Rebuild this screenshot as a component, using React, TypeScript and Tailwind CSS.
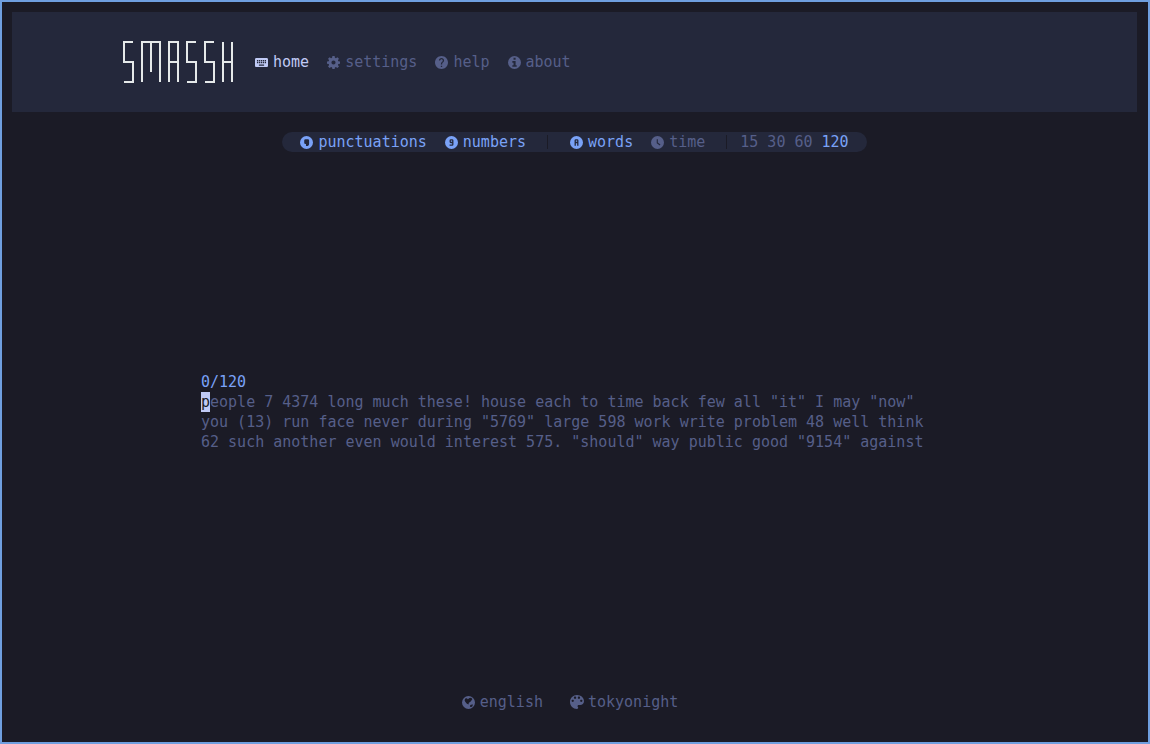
import { useState, type ReactNode } from "react";

function Glyph({ children }: { children: ReactNode }) {
  return (
    <svg viewBox="2 2 20 20" className="size-[13px]" fill="currentColor" fillRule="evenodd" aria-hidden="true">
      {children}
    </svg>
  );
}

const KeyboardIcon = () => (
  <Glyph>
    <path d="M20 5H4c-1.1 0-1.99.9-1.99 2L2 17c0 1.1.9 2 2 2h16c1.1 0 2-.9 2-2V7c0-1.1-.9-2-2-2zm-9 3h2v2h-2V8zm0 3h2v2h-2v-2zM8 8h2v2H8V8zm0 3h2v2H8v-2zm-1 2H5v-2h2v2zm0-3H5V8h2v2zm9 7H8v-2h8v2zm0-4h-2v-2h2v2zm0-3h-2V8h2v2zm3 3h-2v-2h2v2zm0-3h-2V8h2v2z" />
  </Glyph>
);

const GearIcon = () => (
  <Glyph>
    <path d="M10.300 2h3.400l.5 2.800 1.500.600 2.300-1.600 2.400 2.400-1.600 2.300.6 1.500 2.600.5v3.400l-2.600.4-.6 1.500 1.600 2.300-2.400 2.400-2.300-1.600-1.500.6-.5 2.500h-3.400l-.5-2.500-1.500-.6L6 20.500l-2.400-2.400 1.600-2.300-.6-1.500L2 13.900v-3.400l2.600-.5.6-1.500L3.600 6.200 6 3.800l2.300 1.600 1.500-.6zM12 8.800a3.200 3.200 0 1 0 0 6.400a3.200 3.200 0 0 0 0-6.400z" />
  </Glyph>
);

const HelpIcon = () => (
  <Glyph>
    <path d="M12 2C6.48 2 2 6.48 2 12s4.48 10 10 10 10-4.48 10-10S17.52 2 12 2zm1 17h-2v-2h2v2zm2.07-7.75l-.9.92C13.45 12.9 13 13.5 13 15h-2v-.5c0-1.1.45-2.1 1.17-2.83l1.24-1.26c.37-.36.59-.86.59-1.41 0-1.1-.9-2-2-2s-2 .9-2 2H8c0-2.21 1.79-4 4-4s4 1.79 4 4c0 .88-.36 1.68-.93 2.25z" />
  </Glyph>
);

const InfoIcon = () => (
  <Glyph>
    <path d="M12 2a10 10 0 1 0 0 20a10 10 0 0 0 0-20zM10.500 4.700h3.200v2.900h-3.200zM8.700 9.800h5v6.400h1.700v2.400H8.700v-2.400h1.800v-4H8.700z" />
  </Glyph>
);

const QuoteIcon = () => (
  <Glyph>
    <path d="M12 2a10 10 0 1 0 0 20a10 10 0 0 0 0-20zM10.500 7H14a2 2 0 0 1 2 2v4.500a4 4 0 0 1-4 4h-.8v-3.300h-.7a2 2 0 0 1-2-2V9a2 2 0 0 1 2-2z" />
  </Glyph>
);

const NumberIcon = () => (
  <Glyph>
    <path d="M12 2a10 10 0 1 0 0 20a10 10 0 0 0 0-20zM11 7h2a2 2 0 0 1 2 2v6a2 2 0 0 1-2 2H9v-2h4v-2h-2a2 2 0 0 1-2-2V9a2 2 0 0 1 2-2zM11 9v2h2V9z" />
  </Glyph>
);

const LetterIcon = () => (
  <Glyph>
    <path d="M12 2a10 10 0 1 0 0 20a10 10 0 0 0 0-20zM11 7h2a2 2 0 0 1 2 2v8h-2v-4h-2v4H9V9a2 2 0 0 1 2-2zM11 9v2h2V9z" />
  </Glyph>
);

const ClockIcon = () => (
  <Glyph>
    <path d="M12 2a10 10 0 1 0 0 20a10 10 0 0 0 0-20zM10.800 7h1.700v5.100l4 3-1 1.500-4.700-3.500z" />
  </Glyph>
);

const GlobeIcon = () => (
  <Glyph>
    <path d="M12 2a10 10 0 1 0 0 20a10 10 0 0 0 0-20zM13.500 5l2.500-.5 2 2-1.500 2.500-1.500 2-2.500 1.500-.5 2.500-2.500-1-2.500-3-1-2.500 1-2.500 2.500-.5 1.500 1.500zM15.500 15.500l3.500-.5-1.500 3.500-2.500.5-1-1.500z" />
  </Glyph>
);

const PaletteIcon = () => (
  <svg viewBox="3 3 18 18" className="size-[14px]" fill="currentColor" aria-hidden="true">
    <path d="M12 3c-4.97 0-9 4.03-9 9s4.03 9 9 9c.83 0 1.500-.67 1.500-1.500 0-.39-.15-.74-.39-1.010-.23-.26-.38-.61-.38-.99 0-.83.67-1.500 1.500-1.500H16c2.760 0 5-2.240 5-5 0-4.420-4.030-8-9-8zm-5.500 9c-.83 0-1.500-.67-1.500-1.500S5.670 9 6.500 9 8 9.670 8 10.500 7.330 12 6.500 12zm3-4C8.670 8 8 7.330 8 6.500S8.670 5 9.500 5s1.500.67 1.500 1.500S10.330 8 9.500 8zm5 0c-.83 0-1.500-.67-1.500-1.500S13.670 5 14.500 5s1.500.67 1.500 1.500S15.330 8 14.500 8zm3 4c-.83 0-1.500-.67-1.500-1.500S16.670 9 17.500 9s1.500.67 1.500 1.500-.67 1.500-1.500 1.500z" />
  </svg>
);

function Logo() {
  return (
    <svg
      viewBox="0 0 111 42"
      className="h-[42px] w-[111px]"
      fill="none"
      stroke="#e5e9e9"
      strokeWidth="2"
      role="img"
      aria-label="smassh"
    >
      <path d="M10 1H1V21H10V41H1" />
      <path d="M19 41V1H37V41M28 1V31" />
      <path d="M46 41V1H55V41M46 21H55" />
      <path d="M73 1H64V21H73V41H64" />
      <path d="M91 1H82V21H91V41H82" />
      <path d="M100 1V41M109 1V41M100 21H109" />
    </svg>
  );
}

function IconButton({
  icon,
  label,
  color,
  onClick,
}: {
  icon: ReactNode;
  label: string;
  color: string;
  onClick?: () => void;
}) {
  return (
    <button type="button" onClick={onClick} className={`flex cursor-pointer items-center ${color}`}>
      <span className="flex w-[18px] items-center">{icon}</span>
      {label}
    </button>
  );
}

const pages = [
  { name: "home", icon: <KeyboardIcon /> },
  { name: "settings", icon: <GearIcon /> },
  { name: "help", icon: <HelpIcon /> },
  { name: "about", icon: <InfoIcon /> },
];

const lines = [
  'people 7 4374 long much these! house each to time back few all "it" I may "now"',
  'you (13) run face never during "5769" large 598 work write problem 48 well think',
  '62 such another even would interest 575. "should" way public good "9154" against',
];

const muted = "text-[#565f89]";
const accent = "text-[#7aa2f7]";

export default function App() {
  const [page, setPage] = useState("home");
  const [punctuations, setPunctuations] = useState(true);
  const [numbers, setNumbers] = useState(true);
  const [mode, setMode] = useState("words");
  const [count, setCount] = useState(120);

  return (
    <div className="flex min-h-screen flex-col border-2 border-[#6f9fdf] bg-[#1b1b26] pt-[10px] pr-[11px] pb-[30px] pl-[10px] font-['DejaVu_Sans_Mono',monospace] text-[15px] leading-5">
      <header className="flex h-[100px] items-center gap-[21px] bg-[#24283b] pl-[111px]">
        <Logo />
        <nav className="flex gap-[18px]">
          {pages.map((p) => (
            <IconButton
              key={p.name}
              icon={p.icon}
              label={p.name}
              color={page === p.name ? "text-[#c0caf5]" : muted}
              onClick={() => setPage(p.name)}
            />
          ))}
        </nav>
      </header>

      <section aria-label="Test options" className="mt-5 flex justify-center">
        <div className="flex h-5 items-center rounded-full bg-[#24283b] px-[18px]">
          <div className="flex gap-[18px]">
            <IconButton
              icon={<QuoteIcon />}
              label="punctuations"
              color={punctuations ? accent : muted}
              onClick={() => setPunctuations(!punctuations)}
            />
            <IconButton
              icon={<NumberIcon />}
              label="numbers"
              color={numbers ? accent : muted}
              onClick={() => setNumbers(!numbers)}
            />
          </div>
          <div className="mr-[22px] ml-[21px] h-[14px] w-px bg-[#1b1b26]" />
          <div className="flex gap-[18px]">
            <IconButton
              icon={<LetterIcon />}
              label="words"
              color={mode === "words" ? accent : muted}
              onClick={() => setMode("words")}
            />
            <IconButton
              icon={<ClockIcon />}
              label="time"
              color={mode === "time" ? accent : muted}
              onClick={() => setMode("time")}
            />
          </div>
          <div className="mr-[13px] ml-[21px] h-[14px] w-px bg-[#1b1b26]" />
          <div className="flex gap-[9px]">
            {[15, 30, 60, 120].map((n) => (
              <button
                key={n}
                type="button"
                onClick={() => setCount(n)}
                className={`cursor-pointer ${count === n ? accent : muted}`}
              >
                {n}
              </button>
            ))}
          </div>
        </div>
      </section>

      <main className="flex flex-1 items-center justify-center pb-5">
        <div className="w-full max-w-[747px]">
          <div className={accent}>0/{count}</div>
          <p className={muted}>
            {lines.map((line, i) => (
              <span key={line} className="block">
                {i === 0 ? (
                  <>
                    <span className="inline-block bg-[#c0caf5] text-[#1b1b26]">{line[0]}</span>
                    {line.slice(1)}
                  </>
                ) : (
                  line
                )}
              </span>
            ))}
          </p>
        </div>
      </main>

      <footer className="flex justify-center gap-[27px] pr-[9px]">
        <IconButton icon={<GlobeIcon />} label="english" color={muted} />
        <IconButton icon={<PaletteIcon />} label="tokyonight" color={muted} />
      </footer>
    </div>
  );
}
